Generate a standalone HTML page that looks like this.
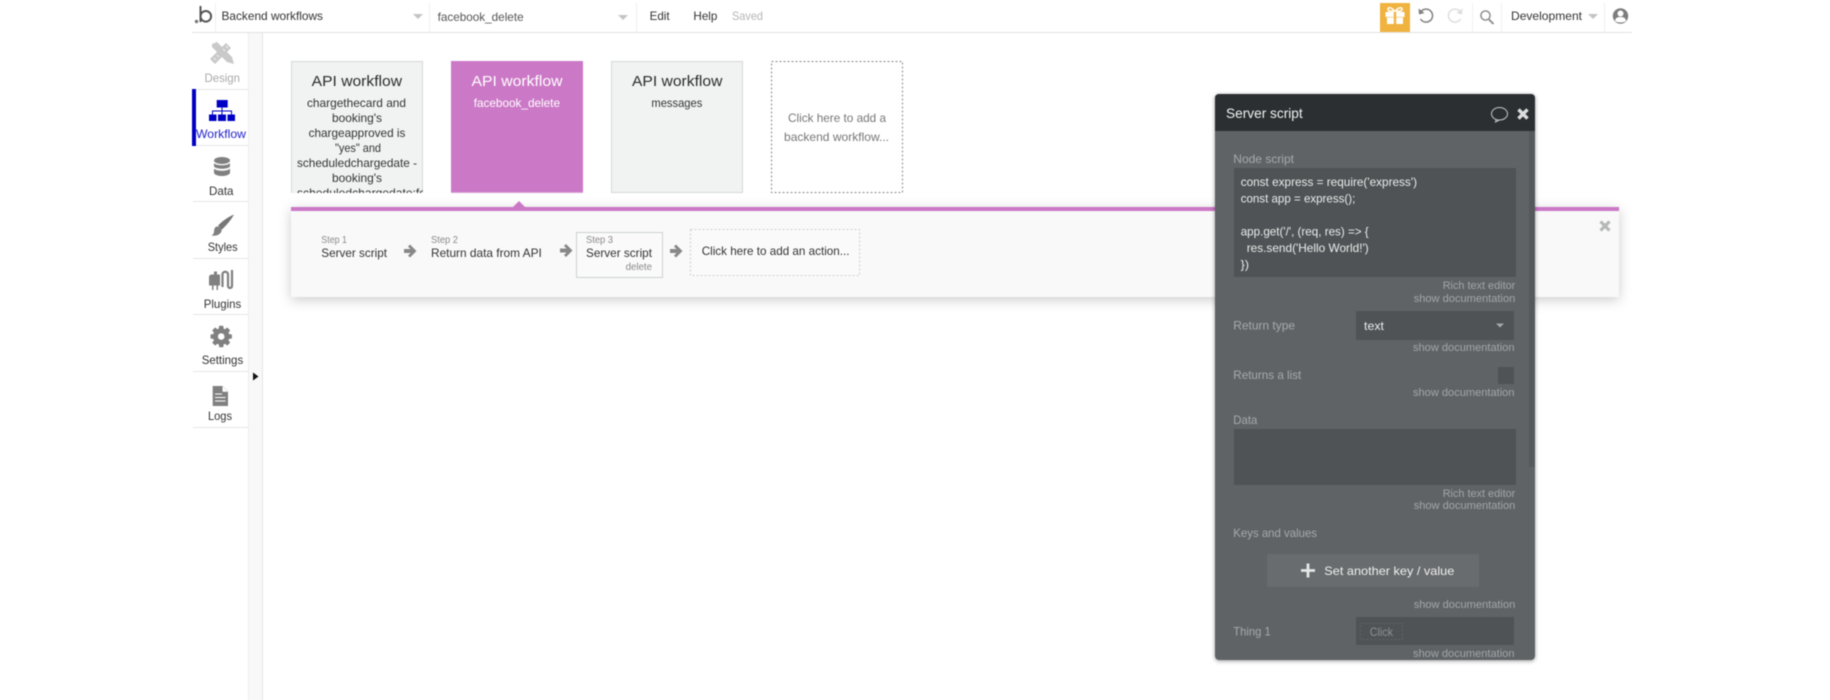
<!DOCTYPE html>
<html><head><meta charset="utf-8"><style>
html,body{margin:0;padding:0;background:#fff;width:1830px;height:700px;overflow:hidden}
svg{display:block;filter:blur(.4px)}
text{font-family:"Liberation Sans",sans-serif;white-space:pre}
.l{font-size:12px;fill:#a6aaab}
.d{font-size:11px;fill:#a2a6a7}
.c{font-size:12px;fill:#ebecec}
.s{font-size:12px;fill:#333}
.g{font-size:10.5px;fill:#8a8a8a}
.n{font-size:12px;fill:#333}
</style></head><body>
<svg width="1830" height="700" viewBox="0 0 1830 700" xmlns="http://www.w3.org/2000/svg">
<defs>
<filter id="sh" x="-5%" y="-20%" width="110%" height="150%"><feDropShadow dx="0" dy="3" stdDeviation="6" flood-color="#000" flood-opacity=".2"/></filter>
<filter id="sh2" x="-10%" y="-5%" width="120%" height="110%"><feDropShadow dx="0" dy="1" stdDeviation="2" flood-color="#000" flood-opacity=".4"/></filter>
<clipPath id="c1"><rect x="291" y="61" width="132" height="132"/></clipPath>
</defs>
<rect width="1830" height="700" fill="#fff"/>
<!-- top bar -->
<rect x="192" y="32" width="1440" height="1" fill="#e2e2e2"/>
<g fill="#f0f0f0"><rect x="215" y="3" width="1" height="29"/><rect x="429" y="3" width="1" height="29"/><rect x="636" y="3" width="1" height="29"/><rect x="1472" y="3" width="1" height="29"/><rect x="1501" y="3" width="1" height="29"/><rect x="1604" y="3" width="1" height="29"/></g>
<circle cx="196.500" cy="21.500" r="1.700" fill="#777"/>
<path d="M200.500 6V22" stroke="#555" stroke-width="2" fill="none"/>
<circle cx="205.800" cy="16.300" r="5.300" stroke="#555" stroke-width="2" fill="none"/>
<text class="n" x="221.500" y="20" textLength="101.500" lengthAdjust="spacingAndGlyphs">Backend workflows</text>
<path d="M413 14h10l-5 5z" fill="#c4c4c4"/>
<text class="n" x="437.600" y="21" style="fill:#555" textLength="86" lengthAdjust="spacingAndGlyphs">facebook_delete</text>
<path d="M618 15h10l-5 5z" fill="#c4c4c4"/>
<text class="n" x="649.600" y="20" textLength="20" lengthAdjust="spacingAndGlyphs">Edit</text>
<text class="n" x="693.400" y="20" textLength="24" lengthAdjust="spacingAndGlyphs">Help</text>
<text class="n" x="732" y="20" style="fill:#b5b5b5" textLength="31" lengthAdjust="spacingAndGlyphs">Saved</text>
<rect x="1380" y="3" width="30" height="29" fill="#f0b33f"/>
<g fill="#fff"><rect x="1385.500" y="12" width="19" height="5"/><rect x="1387" y="17.500" width="16" height="6.500"/></g>
<rect x="1393.800" y="12" width="2.400" height="12" fill="#f0b33f"/>
<path d="M1394.500 11c-3-4-7-4-6.500-1.500s4 1.500 6.500 1.500zM1395.500 11c3-4 7-4 6.500-1.500s-4 1.500-6.500 1.500z" fill="none" stroke="#fff" stroke-width="1.500"/>
<path d="M1421 11.500a6.500 6.500 0 1 1-.5 7.500" fill="none" stroke="#808080" stroke-width="1.500"/><path d="M1418.500 8.500l.5 6 5.500-1.500z" fill="#808080"/>
<path d="M1460 11.500a6.500 6.500 0 1 0 .5 7.500" fill="none" stroke="#dedede" stroke-width="1.500"/><path d="M1462.500 8.500l-.5 6-5.500-1.500z" fill="#dedede"/>
<circle cx="1485.500" cy="15.500" r="4.600" fill="none" stroke="#8a8a8a" stroke-width="1.400"/><path d="M1489 19.500l4.500 4.500" stroke="#8a8a8a" stroke-width="1.900"/>
<text class="n" x="1511" y="20" textLength="71" lengthAdjust="spacingAndGlyphs">Development</text>
<path d="M1588 14h10l-5 5z" fill="#c4c4c4"/>
<circle cx="1620.500" cy="16" r="7.700" fill="#7d7d7d"/>
<circle cx="1620.500" cy="13.500" r="3" fill="#fff"/><path d="M1615 21c.5-3.500 2.500-4 5.500-4s5 .5 5.500 4c-2.500 2-8.500 2-11 0z" fill="#fff"/>
<!-- sidebar -->
<rect x="248" y="33" width="15" height="667" fill="#f8f8f8"/>
<rect x="248" y="33" width="1" height="667" fill="#ededed"/>
<rect x="262" y="33" width="1" height="667" fill="#e4e4e4"/>
<g fill="#e6e6e6"><rect x="193" y="89" width="55" height="1"/><rect x="193" y="145" width="55" height="1"/><rect x="193" y="201" width="55" height="1"/><rect x="193" y="258" width="55" height="1"/><rect x="193" y="314" width="55" height="1"/><rect x="193" y="371" width="55" height="1"/><rect x="193" y="427" width="55" height="1"/></g>
<rect x="192" y="89" width="4" height="57" fill="#0000c4"/>
<path d="M253 372.500l5.500 4-5.500 4z" fill="#111"/>
<!-- design icon -->
<g fill="#c9c9c9" transform="translate(-1 0)"><path d="M213 44l5-2 15 15 2 7-7-2-15-15z"/><path d="M211 59l16-16 5 5-16 16z"/></g>
<g stroke="#fff" stroke-width=".8" transform="translate(-1 0)"><path d="M215 58l2 2M218 55l2 2M224 49l2 2M227 46l2 2"/></g>
<text class="s" x="204.500" y="82" style="fill:#aaa" textLength="35.500" lengthAdjust="spacingAndGlyphs">Design</text>
<!-- workflow icon -->
<g fill="#0000c4"><rect x="216.700" y="100" width="11" height="7.500"/><rect x="209" y="114.500" width="7.500" height="6.500"/><rect x="218" y="114.500" width="8" height="6.500"/><rect x="227.500" y="114.500" width="7.500" height="6.500"/></g>
<path d="M222 107.500v7M212.500 114.500v-3.500h19v3.500" stroke="#0000c4" stroke-width="1" fill="none"/>
<text class="s" x="196" y="138" style="fill:#2424cc" textLength="50" lengthAdjust="spacingAndGlyphs">Workflow</text>
<!-- data icon -->
<g fill="#808080"><ellipse cx="222" cy="160.500" rx="8" ry="3.500"/><path d="M214 163c2 3 14 3 16 0v3.500c-2 3-14 3-16 0z"/><path d="M214 168.500c2 3 14 3 16 0v4.500c-2 4-14 4-16 0z"/></g>
<text class="s" x="209" y="195" textLength="24.500" lengthAdjust="spacingAndGlyphs">Data</text>
<!-- styles icon -->
<path d="M234 214.500c-3 5.500-7 10-12 15l-4-4c5-5 10-8.500 16-11z" fill="#777"/><path d="M217 226.500c4.500 0 6 3.500 3.500 6.500-2.500 2.800-6 3-9 2.500 2.700-1.500 2.500-3.500 2.700-5.500.2-1.700 1.300-3.500 2.800-3.500z" fill="#808080"/>
<text class="s" x="207.700" y="251" textLength="30" lengthAdjust="spacingAndGlyphs">Styles</text>
<!-- plugins icon -->
<path d="M211 274.500h3v-3h3v3h3v-4h0v15h-2v4.500h-1.500v-4.500h-3v4.500H212v-4.500h-3v-8a3 3 0 0 1 2-3z" fill="#808080"/>
<path d="M223 287v-13a2.800 2.800 0 0 1 5.500 0v12a2 2 0 0 0 4 0v-16" fill="none" stroke="#808080" stroke-width="2.200" transform="translate(-.5 0)"/>
<text class="s" x="203.700" y="308" textLength="37.500" lengthAdjust="spacingAndGlyphs">Plugins</text>
<!-- settings icon -->
<g transform="translate(221.200 336.500)"><circle r="8.300" fill="#808080"/><g fill="#808080"><rect x="-2.300" y="-10.700" width="4.600" height="21.400" rx="1"/><rect x="-2.300" y="-10.700" width="4.600" height="21.400" rx="1" transform="rotate(45)"/><rect x="-2.300" y="-10.700" width="4.600" height="21.400" rx="1" transform="rotate(90)"/><rect x="-2.300" y="-10.700" width="4.600" height="21.400" rx="1" transform="rotate(135)"/></g><circle r="3.300" fill="#fff"/></g>
<text class="s" x="201.700" y="364" textLength="41.500" lengthAdjust="spacingAndGlyphs">Settings</text>
<!-- logs icon -->
<path d="M212.700 386h10l5.300 5.500V406h-15.300z" fill="#808080"/><path d="M222.500 386v5.800h5.500z" fill="#fff"/><path d="M215 394h7M215 397.500h10.500M215 401h10.500" stroke="#fff" stroke-width="1.100"/>
<text class="s" x="208" y="420" textLength="24" lengthAdjust="spacingAndGlyphs">Logs</text>
<!-- cards -->
<g clip-path="url(#c1)"><rect x="291.500" y="61.500" width="131" height="132" fill="#f1f2f2" stroke="#d5d8d8"/>
<text x="311.700" y="86" font-size="15" fill="#2b2b2b" textLength="90.300" lengthAdjust="spacingAndGlyphs">API workflow</text>
<text class="s" x="307" y="107" textLength="99" lengthAdjust="spacingAndGlyphs">chargethecard and</text>
<text class="s" x="332" y="122" textLength="50" lengthAdjust="spacingAndGlyphs">booking's</text>
<text class="s" x="308.600" y="137" textLength="96.800" lengthAdjust="spacingAndGlyphs">chargeapproved is</text>
<text class="s" x="335" y="152" textLength="46" lengthAdjust="spacingAndGlyphs">"yes" and</text>
<text class="s" x="297" y="167" textLength="120" lengthAdjust="spacingAndGlyphs">scheduledchargedate -</text>
<text class="s" x="332" y="182" textLength="50" lengthAdjust="spacingAndGlyphs">booking's</text>
<text class="s" x="297" y="197" textLength="129" lengthAdjust="spacingAndGlyphs">scheduledchargedate:fo</text></g>
<rect x="451" y="61" width="132" height="132" fill="#cb78c6"/><rect x="451" y="192" width="132" height="1" fill="#d9a5d6"/>
<text x="471.500" y="86" font-size="15" fill="#fff" textLength="91" lengthAdjust="spacingAndGlyphs">API workflow</text>
<text x="473.700" y="107" font-size="12" fill="#fff" textLength="86.300" lengthAdjust="spacingAndGlyphs">facebook_delete</text>
<rect x="611.500" y="61.500" width="131" height="131" fill="#f1f2f2" stroke="#d5d8d8"/>
<text x="632" y="86" font-size="15" fill="#2b2b2b" textLength="90.400" lengthAdjust="spacingAndGlyphs">API workflow</text>
<text class="s" x="651.400" y="107" textLength="50.900" lengthAdjust="spacingAndGlyphs">messages</text>
<rect x="771.500" y="61.500" width="131" height="131" fill="#fff" stroke="#8a8a8a" stroke-dasharray="2 2"/>
<text class="s" x="788" y="122" style="fill:#777" textLength="98" lengthAdjust="spacingAndGlyphs">Click here to add a</text>
<text class="s" x="784" y="141" style="fill:#777" textLength="105" lengthAdjust="spacingAndGlyphs">backend workflow...</text>
<!-- panel -->
<rect x="291" y="207" width="1328" height="90" fill="#f9f9f9" filter="url(#sh)"/>
<rect x="291" y="207" width="1328" height="4" fill="#cb78c6"/>
<path d="M513 207l6-6 6 6z" fill="#cb78c6"/>
<text class="g" x="321.300" y="243" textLength="25.700" lengthAdjust="spacingAndGlyphs">Step 1</text>
<text class="s" x="321.300" y="257" textLength="65.700" lengthAdjust="spacingAndGlyphs">Server script</text>
<path d="M404 249h6.500l-2.500-2.500 2-2 6.500 6.500-6.500 6.500-2-2 2.500-2.500H404z" fill="#888"/>
<text class="g" x="431" y="243" textLength="27" lengthAdjust="spacingAndGlyphs">Step 2</text>
<text class="s" x="431" y="257" textLength="110.800" lengthAdjust="spacingAndGlyphs">Return data from API</text>
<path d="M560 248.500h6.500l-2.500-2.500 2-2 6.500 6.500-6.500 6.500-2-2 2.500-2.500H560z" fill="#888"/>
<rect x="576.500" y="232.500" width="86" height="45" fill="#fafafa" stroke="#cdd1d1"/>
<text class="g" x="586" y="243" textLength="27" lengthAdjust="spacingAndGlyphs">Step 3</text>
<text class="s" x="586" y="257" textLength="66" lengthAdjust="spacingAndGlyphs">Server script</text>
<text class="g" x="625.600" y="270" textLength="26.400" lengthAdjust="spacingAndGlyphs">delete</text>
<path d="M670 249h6.500l-2.500-2.500 2-2 6.500 6.500-6.500 6.500-2-2 2.500-2.500H670z" fill="#888"/>
<rect x="690.500" y="229.500" width="169" height="46" fill="#fafafa" stroke="#cfcfcf" stroke-dasharray="2 2"/>
<text class="s" x="701.700" y="255" textLength="147.800" lengthAdjust="spacingAndGlyphs">Click here to add an action...</text>
<path d="M1600.500 221.500l9 9M1609.500 221.500l-9 9" stroke="#b5b8b8" stroke-width="3.200"/>
<!-- server script palette -->
<rect x="1215" y="94" width="320" height="566" rx="4" fill="#5f6466" filter="url(#sh2)"/>
<path d="M1215 131V98a4 4 0 0 1 4-4h312a4 4 0 0 1 4 4v33z" fill="#2b2f31"/>
<rect x="1529" y="131" width="6" height="336" fill="#55595b"/>
<text x="1226" y="118" font-size="14" fill="#f2f2f2" textLength="76.700" lengthAdjust="spacingAndGlyphs">Server script</text>
<path d="M1499.500 120c-4.500 0-8-2.700-8-6.200s3.600-6.300 8-6.300 8 2.900 8 6.300-3.500 6.200-8 6.200l-4 2 .7-2.800" fill="none" stroke="#c5c8c8" stroke-width="1"/>
<path d="M1518.500 109.500l9 9M1527.500 109.500l-9 9" stroke="#dcdddd" stroke-width="3.400"/>
<text class="l" x="1233.300" y="163" textLength="60.700" lengthAdjust="spacingAndGlyphs">Node script</text>
<rect x="1234" y="168" width="282" height="109" fill="#4f5355"/>
<text class="c" x="1240.700" y="186" textLength="176.300" lengthAdjust="spacingAndGlyphs">const express = require('express')</text>
<text class="c" x="1240.700" y="202.500" textLength="114.600" lengthAdjust="spacingAndGlyphs">const app = express();</text>
<text class="c" x="1240.700" y="235.500" textLength="128" lengthAdjust="spacingAndGlyphs">app.get('/', (req, res) =&gt; {</text>
<text class="c" x="1246.700" y="252" textLength="122" lengthAdjust="spacingAndGlyphs">res.send('Hello World!')</text>
<text class="c" x="1240.700" y="268.500" textLength="8.300" lengthAdjust="spacingAndGlyphs">})</text>
<text class="d" x="1442.700" y="289" textLength="72.600" lengthAdjust="spacingAndGlyphs">Rich text editor</text>
<text class="d" x="1413.700" y="302" textLength="101.600" lengthAdjust="spacingAndGlyphs">show documentation</text>
<text class="l" x="1233.300" y="329.500" textLength="61.700" lengthAdjust="spacingAndGlyphs">Return type</text>
<rect x="1356" y="311" width="158" height="29" fill="#4f5355"/>
<text class="c" x="1364" y="330" textLength="20" lengthAdjust="spacingAndGlyphs">text</text>
<path d="M1496 323.500h8l-4 4z" fill="#a6aaab"/>
<text class="d" x="1413" y="351" textLength="101.500" lengthAdjust="spacingAndGlyphs">show documentation</text>
<text class="l" x="1233.300" y="379" textLength="68" lengthAdjust="spacingAndGlyphs">Returns a list</text>
<rect x="1498" y="367" width="16" height="17" fill="#4f5355"/>
<text class="d" x="1413" y="396" textLength="101.500" lengthAdjust="spacingAndGlyphs">show documentation</text>
<text class="l" x="1233.300" y="424" textLength="24" lengthAdjust="spacingAndGlyphs">Data</text>
<rect x="1234" y="429" width="282" height="56" fill="#4f5355"/>
<text class="d" x="1442.700" y="497" textLength="72.600" lengthAdjust="spacingAndGlyphs">Rich text editor</text>
<text class="d" x="1413.700" y="509" textLength="101.600" lengthAdjust="spacingAndGlyphs">show documentation</text>
<text class="l" x="1233.300" y="537" textLength="83.700" lengthAdjust="spacingAndGlyphs">Keys and values</text>
<rect x="1267" y="554" width="212" height="33" rx="2" fill="#686c6e"/>
<path d="M1301 570.500h14M1308 563.500v14" stroke="#e5e6e6" stroke-width="2.800"/>
<text x="1324.300" y="575" font-size="12" fill="#f0f0f0" textLength="130" lengthAdjust="spacingAndGlyphs">Set another key / value</text>
<text class="d" x="1413.700" y="608" textLength="101.600" lengthAdjust="spacingAndGlyphs">show documentation</text>
<text class="l" x="1233.300" y="635.500" textLength="37.400" lengthAdjust="spacingAndGlyphs">Thing 1</text>
<rect x="1356" y="617" width="158" height="28" fill="#4f5355"/>
<rect x="1360.500" y="623.500" width="42" height="16" fill="none" stroke="#5f6466" stroke-dasharray="2 2"/>
<text class="l" x="1369.700" y="636" style="fill:#8c9091" textLength="23.300" lengthAdjust="spacingAndGlyphs">Click</text>
<text class="d" x="1413" y="657" textLength="101.500" lengthAdjust="spacingAndGlyphs">show documentation</text>
</svg>
</body></html>
